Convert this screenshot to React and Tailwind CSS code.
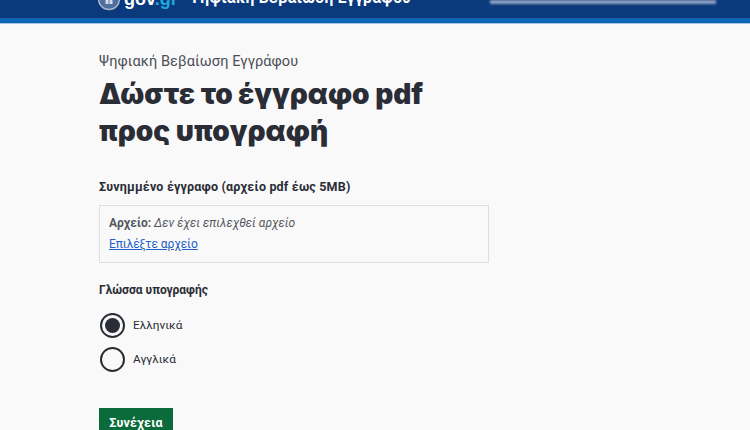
export default function App() {
  return (
    <div className="w-[750px] h-[430px] overflow-hidden bg-[#f9f9f9] text-[#2a2d36] font-['Roboto','Noto_Sans',sans-serif]">
      <header className="relative h-[24px] bg-[#0a3a7c] overflow-hidden">
        <div className="h-[18px] flex items-end overflow-hidden pl-[97px]">
          <div className="flex items-center h-[24px] mb-[7px] shrink-0">
            <svg width="24" height="24" viewBox="0 0 24 24" className="shrink-0">
              <circle cx="12" cy="12" r="10.5" fill="#4f6f9e" stroke="#aab6ca" strokeWidth="1.5" />
              <rect x="8.5" y="4" width="7" height="13" fill="#d5dbe6" />
              <rect x="11.3" y="4" width="1.4" height="13" fill="#7f96b8" />
            </svg>
            <span className="ml-[3px] text-[18px] leading-none font-bold text-white font-['Liberation_Sans',sans-serif]">gov<span className="text-[#1fa8e0]">.gr</span></span>
            <span className="ml-[11px] text-[15.6px] leading-none font-bold text-white whitespace-nowrap tracking-[0.3px]">Ψηφιακή Βεβαίωση Εγγράφου</span>
          </div>
        </div>
        <div className="absolute left-[490px] top-0 w-[226px] h-[4px] bg-[#8f9fc2] blur-[1px]" />
        <div className="h-[5px] bg-[#0e65b3]" />
        <div className="h-px bg-[#a9c6e2]" />
      </header>
      <main className="pl-[99px] pt-[29px] w-[489px] box-content">
        <p className="text-[14.5px] leading-[18px] text-[#4b4e57] tracking-[0.1px]">Ψηφιακή Βεβαίωση Εγγράφου</p>
        <h1 className="mt-[5px] text-[28px] leading-[37px] font-black font-['Inter',sans-serif] w-[389px]">Δώστε το έγγραφο pdf προς υπογραφή</h1>
        <p className="mt-[29px] text-[12.5px] leading-[16px] font-bold tracking-[0.18px]">Συνημμένο έγγραφο (αρχείο pdf έως 5MB)</p>
        <div className="mt-[10px] w-[390px] h-[58px] border border-[#dfdfdf] px-[9px] pt-[8px]">
          <p className="text-[12px] leading-[18px] text-[#55585f]"><b className="font-bold">Αρχείο:</b> <i>Δεν έχει επιλεχθεί αρχείο</i></p>
          <a className="block mt-[3px] text-[12px] tracking-[-0.1px] leading-[18px] text-[#2260c8] underline">Επιλέξτε αρχείο</a>
        </div>
        <p className="mt-[19px] text-[12px] leading-[16px] font-bold">Γλώσσα υπογραφής</p>
        <div className="mt-[15px] flex items-center gap-[8px] h-[25px] pl-[1px]">
          <span className="w-[25px] h-[25px] rounded-full border-2 border-[#2a2d36] flex items-center justify-center">
            <span className="w-[15px] h-[15px] rounded-full bg-[#2a2d36]" />
          </span>
          <span className="text-[11.8px]">Ελληνικά</span>
        </div>
        <div className="mt-[9px] flex items-center gap-[8px] h-[25px] pl-[1px]">
          <span className="w-[25px] h-[25px] rounded-full border-2 border-[#2a2d36]" />
          <span className="text-[11.8px]">Αγγλικά</span>
        </div>
        <button className="block mt-[36px] w-[74px] h-[34px] bg-[#0b6b3a] text-white text-[12.5px] font-bold tracking-[0.2px] pb-[3px]">Συνέχεια</button>
      </main>
    </div>
  );
}
